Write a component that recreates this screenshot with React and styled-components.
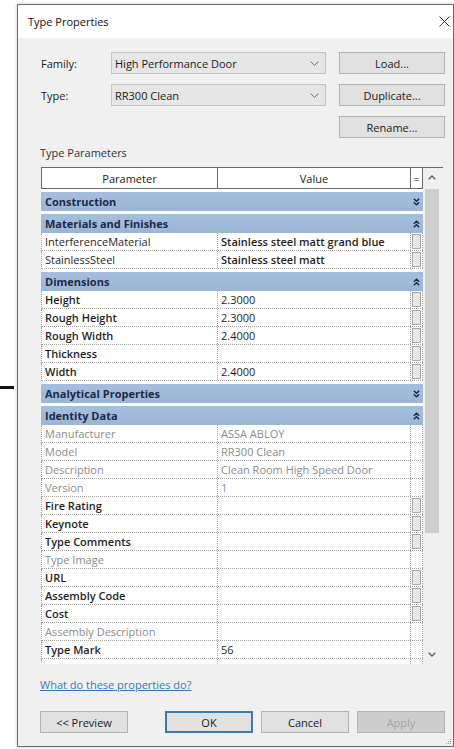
import styled, { createGlobalStyle } from "styled-components";

const GlobalStyle = createGlobalStyle`
  body {
    margin: 0;
    background: #ffffff;
    font-family: "Open Sans", "Noto Sans", sans-serif;
    font-size: 11px;
    color: #1a1a1a;
  }
`;

const rows = [
  { group: "Construction", open: false },
  { group: "Materials and Finishes", open: true },
  { name: "InterferenceMaterial", value: "Stainless steel matt grand blue", edit: true, strongValue: true },
  { name: "StainlessSteel", value: "Stainless steel matt", edit: true, strongValue: true },
  { group: "Dimensions", open: true },
  { name: "Height", value: "2.3000", edit: true, strong: true },
  { name: "Rough Height", value: "2.3000", edit: true, strong: true },
  { name: "Rough Width", value: "2.4000", edit: true, strong: true },
  { name: "Thickness", value: "", edit: true, strong: true },
  { name: "Width", value: "2.4000", edit: true, strong: true },
  { group: "Analytical Properties", open: false },
  { group: "Identity Data", open: true },
  { name: "Manufacturer", value: "ASSA ABLOY", readOnly: true },
  { name: "Model", value: "RR300 Clean", readOnly: true },
  { name: "Description", value: "Clean Room High Speed Door", readOnly: true },
  { name: "Version", value: "1", readOnly: true },
  { name: "Fire Rating", value: "", edit: true, strong: true },
  { name: "Keynote", value: "", edit: true, strong: true },
  { name: "Type Comments", value: "", edit: true, strong: true },
  { name: "Type Image", value: "", readOnly: true },
  { name: "URL", value: "", edit: true, strong: true },
  { name: "Assembly Code", value: "", edit: true, strong: true },
  { name: "Cost", value: "", edit: true, strong: true },
  { name: "Assembly Description", value: "", readOnly: true },
  { name: "Type Mark", value: "56", strong: true },
  { name: "", value: "" },
];

function Chevron() {
  return (
    <svg width="9" height="5" viewBox="0 0 9 5">
      <path d="M0.5 0.5 L4.5 4.3 L8.5 0.5" fill="none" stroke="#707070" strokeWidth="1" />
    </svg>
  );
}

// collapse / expand marker of a parameter group
function DoubleChevron({ open }) {
  return (
    <svg width="7" height="8" viewBox="0 0 7 8" style={{ transform: open ? "rotate(180deg)" : "none" }}>
      <path d="M0.8 0.8 L3.5 3.3 L6.2 0.8 M0.8 4.3 L3.5 6.8 L6.2 4.3" fill="none" stroke="#1c2a44" strokeWidth="1.4" />
    </svg>
  );
}

function App() {
  return (
    <Page>
      <GlobalStyle />
      <LeaderLine />
      <Dialog>
        <TitleBar>
          <Title>Type Properties</Title>
          <CloseButton>
            <svg width="11" height="11" viewBox="0 0 11 11">
              <path d="M0.5 0.5 L10.5 10.5 M10.5 0.5 L0.5 10.5" stroke="#333" strokeWidth="1" />
            </svg>
          </CloseButton>
        </TitleBar>
        <Body>
          <FormGrid>
            <Label>Family:</Label>
            <Combo>
              <span>High Performance Door</span>
              <Chevron />
            </Combo>
            <Button>Load...</Button>
            <Label>Type:</Label>
            <Combo>
              <span>RR300 Clean</span>
              <Chevron />
            </Combo>
            <Button>Duplicate...</Button>
            <Button $col={3}>Rename...</Button>
          </FormGrid>

          <SectionLabel>Type Parameters</SectionLabel>

          <GridFrame>
            <Rows>
              <HeaderRow>
                <HeaderCell>Parameter</HeaderCell>
                <HeaderCell>Value</HeaderCell>
                <HeaderCell>=</HeaderCell>
              </HeaderRow>
              {rows.map((r, i) =>
                r.group ? (
                  <GroupRow key={i}>
                    <span>{r.group}</span>
                    <GroupToggle>
                      <DoubleChevron open={r.open} />
                    </GroupToggle>
                  </GroupRow>
                ) : (
                  <DataRow key={i}>
                    <Cell $readOnly={r.readOnly} $strong={r.strong}>{r.name}</Cell>
                    <Cell $readOnly={r.readOnly} $strong={r.strongValue}>{r.value}</Cell>
                    <FormulaCell>{r.edit && <FormulaButton />}</FormulaCell>
                  </DataRow>
                )
              )}
            </Rows>
            <Scrollbar>
              <ScrollArrow>
                <svg width="8" height="5" viewBox="0 0 8 5">
                  <path d="M0.7 4.3 L4 1 L7.3 4.3" fill="none" stroke="#606060" strokeWidth="1.3" />
                </svg>
              </ScrollArrow>
              <ScrollTrack>
                <Thumb />
              </ScrollTrack>
              <ScrollArrow>
                <svg width="8" height="5" viewBox="0 0 8 5">
                  <path d="M0.7 0.7 L4 4 L7.3 0.7" fill="none" stroke="#606060" strokeWidth="1.3" />
                </svg>
              </ScrollArrow>
            </Scrollbar>
          </GridFrame>

          <HelpLink href="#">What do these properties do?</HelpLink>

          <Footer>
            <Button $wide>&lt;&lt; Preview</Button>
            <ButtonGroup>
              <Button $wide $default>OK</Button>
              <Button $wide>Cancel</Button>
              <Button $wide $disabled>Apply</Button>
            </ButtonGroup>
          </Footer>
          <Grip>
            <svg width="6" height="6" viewBox="0 0 6 6">
              <rect x="4" y="0" width="1" height="1" fill="#a0a0a0" />
              <rect x="2" y="2" width="1" height="1" fill="#a0a0a0" />
              <rect x="4" y="2" width="1" height="1" fill="#a0a0a0" />
              <rect x="0" y="4" width="1" height="1" fill="#a0a0a0" />
              <rect x="2" y="4" width="1" height="1" fill="#a0a0a0" />
              <rect x="4" y="4" width="1" height="1" fill="#a0a0a0" />
            </svg>
          </Grip>
        </Body>
      </Dialog>
    </Page>
  );
}
export default App;

const Page = styled.div`
  position: relative;
  width: 454px;
  height: 749px;
  padding: 4px 0 0 17px;
  box-sizing: border-box;
`;
const LeaderLine = styled.div`
  position: absolute;
  left: 0;
  top: 386px;
  width: 14px;
  height: 3px;
  background: #111;
`;
const Dialog = styled.div`
  width: 435px;
  border: 1px solid #6f6f6f;
  box-shadow: 0 0 3px rgba(0, 0, 0, 0.25);
  background: #f0f0f0;
`;
const TitleBar = styled.div`
  height: 33px;
  background: #ffffff;
  display: flex;
  align-items: center;
  justify-content: space-between;
  padding-left: 10px;
`;
const Title = styled.div`
  font-size: 11px;
  color: #111;
`;
const CloseButton = styled.div`
  width: 20px;
  height: 20px;
  display: flex;
  align-items: center;
  justify-content: center;
  margin-right: -1px;
`;
const Body = styled.div`
  position: relative;
  display: flex;
  flex-direction: column;
  padding: 14px 7px 13px 22px;
`;
const FormGrid = styled.div`
  display: grid;
  grid-template-columns: 58px 215px 106px;
  grid-auto-rows: 22px;
  column-gap: 13px;
  row-gap: 10px;
  align-items: center;
`;
const Label = styled.div`
  color: #222;
  padding-left: 1px;
`;
const Combo = styled.div`
  height: 22px;
  box-sizing: border-box;
  border: 1px solid #c4c4c4;
  background: #e6e6e6;
  display: flex;
  align-items: center;
  justify-content: space-between;
  padding: 0 6px 0 3px;
  color: #1a1a1a;
`;
const Button = styled.div`
  grid-column: ${(p) => p.$col || "auto"};
  width: ${(p) => (p.$wide ? "88px" : "auto")};
  height: 22px;
  box-sizing: border-box;
  display: flex;
  align-items: center;
  justify-content: center;
  border: ${(p) => (p.$default ? "2px solid #3f79ad" : "1px solid #b3b3b3")};
  background: ${(p) => (p.$disabled ? "#cdcdcd" : "#e1e1e1")};
  color: ${(p) => (p.$disabled ? "#a3a3a3" : "#1a1a1a")};
`;
const SectionLabel = styled.div`
  margin-top: 8px;
  line-height: 14px;
  height: 14px;
  color: #333;
`;
const GridFrame = styled.div`
  margin: 7px 3px 0 1px;
  height: 497px;
  box-sizing: border-box;
  border-top: 1px solid #6a6a6a;
  display: flex;
`;
const Rows = styled.div`
  width: 382px;
  overflow: hidden;
  background: #ffffff;
`;
const HeaderRow = styled.div`
  display: grid;
  grid-template-columns: 176px 193px 12px;
  height: 21px;
  box-sizing: border-box;
  border-left: 1px solid #6a6a6a;
  border-bottom: 1px solid #6a6a6a;
`;
const HeaderCell = styled.div`
  display: flex;
  align-items: center;
  justify-content: center;
  border-right: 1px solid #6a6a6a;
  color: #222;
`;
const GroupRow = styled.div`
  margin-top: 3px;
  height: 19px;
  width: 382px;
  display: flex;
  align-items: center;
  justify-content: space-between;
  padding-left: 4px;
  box-sizing: border-box;
  background: linear-gradient(#a7bfdc, #9cb5d5);
  font-weight: 700;
  color: #1b2a48;
`;
const GroupToggle = styled.div`
  width: 12px;
  display: flex;
  justify-content: center;
  margin-right: 1px;
`;
const DataRow = styled.div`
  display: grid;
  grid-template-columns: 176px 193px 12px;
  height: 18px;
  box-sizing: border-box;
  border-left: 1px dotted #a4a4a4;
  border-bottom: 1px dotted #a4a4a4;
`;
const Cell = styled.div`
  display: flex;
  align-items: center;
  padding-left: 3px;
  border-right: 1px dotted #a4a4a4;
  white-space: nowrap;
  overflow: hidden;
  font-weight: ${(p) => (p.$strong && !p.$readOnly ? 600 : 400)};
  color: ${(p) => (p.$readOnly ? "#8c8c8c" : "#1f1f1f")};
`;
const FormulaCell = styled.div`
  display: flex;
  justify-content: center;
  align-items: center;
  border-right: 1px dotted #a4a4a4;
`;
const FormulaButton = styled.div`
  width: 9px;
  height: 15px;
  box-sizing: border-box;
  border: 1px solid #a6a6a6;
  background: #e8e8e8;
`;
const Scrollbar = styled.div`
  width: 18px;
  display: flex;
  flex-direction: column;
  background: #f0f0f0;
`;
const ScrollArrow = styled.div`
  height: 19px;
  display: flex;
  align-items: center;
  justify-content: center;
`;
const ScrollTrack = styled.div`
  flex: 1;
  display: flex;
  justify-content: center;
  padding-top: 2px;
`;
const Thumb = styled.div`
  width: 14px;
  height: 344px;
  background: #cdcdcd;
`;
const HelpLink = styled.a`
  margin-top: 14px;
  line-height: 14px;
  align-self: flex-start;
  color: #3a77c0;
  text-decoration: underline;
`;
const Footer = styled.div`
  margin-top: 19px;
  margin-right: 1px;
  display: flex;
  justify-content: space-between;
`;
const ButtonGroup = styled.div`
  display: flex;
  gap: 8px;
`;
const Grip = styled.div`
  position: absolute;
  right: 1px;
  bottom: 1px;
  line-height: 0;
`;
